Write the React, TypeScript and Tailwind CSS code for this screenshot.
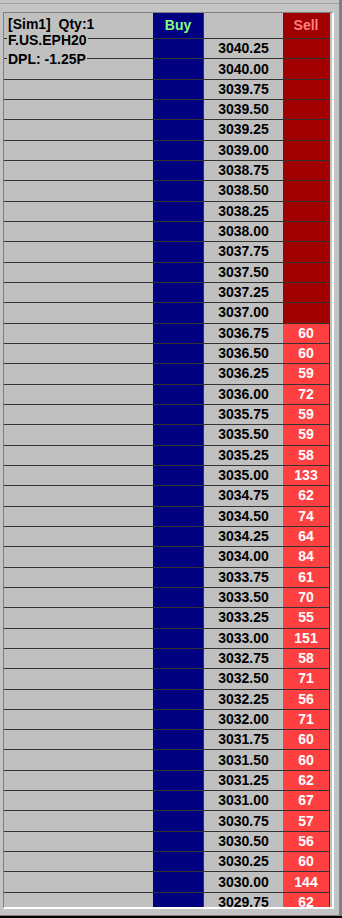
import React from 'react';

const font = { fontFamily: '"Liberation Sans", Arial, sans-serif' };

const sells: Record<string, number> = {
  '3036.75': 60, '3036.50': 60, '3036.25': 59, '3036.00': 72, '3035.75': 59,
  '3035.50': 59, '3035.25': 58, '3035.00': 133, '3034.75': 62, '3034.50': 74,
  '3034.25': 64, '3034.00': 84, '3033.75': 61, '3033.50': 70, '3033.25': 55,
  '3033.00': 151, '3032.75': 58, '3032.50': 71, '3032.25': 56, '3032.00': 71,
  '3031.75': 60, '3031.50': 60, '3031.25': 62, '3031.00': 67, '3030.75': 57,
  '3030.50': 56, '3030.25': 60, '3030.00': 144, '3029.75': 62,
};

// 3040.25 down to 3029.75, one tick apart
const prices = Array.from({ length: 43 }, (_, i) => (3040.25 - i * 0.25).toFixed(2));

const Row: React.FC<{ price: string }> = ({ price }) => {
  const qty = sells[price];
  return (
    <div className="flex h-[20.333px] shrink-0 border-b border-[#333333]">
      <div className="w-[149px] bg-[#c0c0c0]" />
      <div className="w-[51px] bg-[#000080] border-r border-[#333333]" />
      <div className="w-[79px] bg-[#c0c0c0] flex items-center justify-center text-[14px] font-bold text-black">
        {price}
      </div>
      <div
        className={`w-[47px] border-r border-[#333333] flex items-center justify-center text-[14px] font-bold text-white ${
          qty ? 'bg-[#ff4040]' : 'bg-[#a00000]'
        }`}
      >
        {qty ?? ''}
      </div>
    </div>
  );
};

export default function App() {
  return (
    <div className="w-[342px] h-[918px] bg-black overflow-hidden" style={font}>
      <div className="h-[916px] bg-[#c4c4c4] border-r-[3px] border-b border-[#808080] flex flex-col">
        <div className="h-[3px]" />
        <div className="h-px bg-[#a0a0a0]" />
        <div className="h-[8px]" />

        <div className="flex-1 min-h-0 flex pl-[3px] pr-[5px] pb-[6px]">
          <div className="flex-1 flex border-l border-t border-l-[#808080] border-t-[#808080] border-r-2 border-b-2 border-r-white border-b-white bg-[#c0c0c0] overflow-hidden">
            <div className="relative w-[326px] flex flex-col overflow-hidden">
              {/* header */}
              <div className="flex h-[26px] shrink-0 border-b border-[#333333]">
                <div className="w-[149px] bg-[#c0c0c0] pl-[4px] pt-[3px] text-[14px] leading-[16px] font-bold text-black whitespace-pre">
                  [Sim1]  Qty:1
                </div>
                <div className="w-[51px] bg-[#000080] border-r border-[#333333] flex items-center justify-center text-[14px] font-bold text-[#80ff80]">
                  Buy
                </div>
                <div className="w-[79px] bg-[#c0c0c0]" />
                <div className="w-[47px] bg-[#a00000] border-r border-[#333333] flex items-center justify-center text-[14px] font-bold text-[#ff8080]">
                  Sell
                </div>
              </div>

              {prices.map((p) => (
                <Row key={p} price={p} />
              ))}

              {/* account info drawn over the grid lines */}
              <div className="absolute left-[3px] top-[19px] bg-[#c0c0c0] px-px text-[14px] leading-[16px] font-bold text-black">
                F.US.EPH20
              </div>
              <div className="absolute left-[3px] top-[38px] bg-[#c0c0c0] px-px text-[14px] leading-[16px] font-bold text-black">
                DPL: -1.25P
              </div>
            </div>
          </div>
        </div>
      </div>
    </div>
  );
}
